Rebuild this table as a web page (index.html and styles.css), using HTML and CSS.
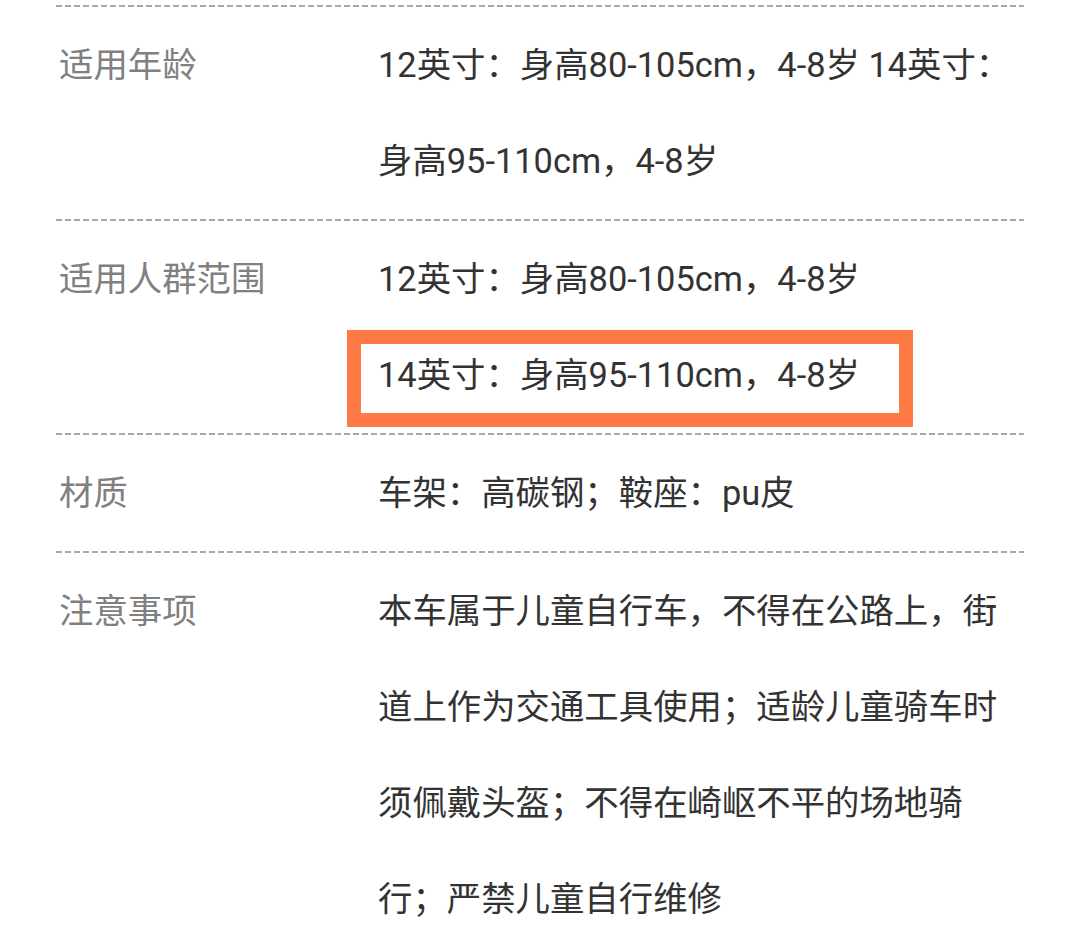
FILE: index.html
```html
<!DOCTYPE html>
<html lang="zh-CN">
<head>
<meta charset="utf-8">
<title>参数</title>
<link rel="stylesheet" href="styles.css">
</head>
<body>
<div class="spec">
  <div class="rule"></div>
  <div class="row">
    <div class="label">适用年龄</div>
    <div class="value">12英寸：身高80-105cm，4-8岁 14英寸：身高95-110cm，4-8岁</div>
  </div>
  <div class="rule"></div>
  <div class="row">
    <div class="label">适用人群范围</div>
    <div class="value">
      <div class="line">12英寸：身高80-105cm，4-8岁</div>
      <div class="line marked">14英寸：身高95-110cm，4-8岁<span class="highlight"></span></div>
    </div>
  </div>
  <div class="rule"></div>
  <div class="row">
    <div class="label">材质</div>
    <div class="value">车架：高碳钢；鞍座：pu皮</div>
  </div>
  <div class="rule"></div>
  <div class="row">
    <div class="label">注意事项</div>
    <div class="value">本车属于儿童自行车，不得在公路上，街道上作为交通工具使用；适龄儿童骑车时须佩戴头盔；不得在崎岖不平的场地骑行；严禁儿童自行维修</div>
  </div>
</div>
</body>
</html>
```

FILE: styles.css
```css
html, body {
  margin: 0;
  padding: 0;
  background: #ffffff;
}

.spec {
  width: 968px;
  margin-left: 56px;
  padding-top: 5px;
  font-family: Roboto, "Noto Sans CJK SC", sans-serif;
  font-size: 34.4px;
  line-height: 96px;
}

.rule {
  height: 2px;
  background: repeating-linear-gradient(to right, #a8a8a8 0 6px, transparent 6px 9px);
}

.row {
  display: flex;
  padding: 10px 0 10px;
}

.label {
  width: 322px;
  padding-left: 3px;
  box-sizing: border-box;
  flex: none;
  color: #808080;
}

.value {
  width: 636px;
  color: #333333;
}

.marked {
  position: relative;
}

.highlight {
  position: absolute;
  left: -31px;
  top: 3px;
  width: 566px;
  height: 97px;
  border: 14px solid #ff7a45;
  box-sizing: border-box;
}
```
